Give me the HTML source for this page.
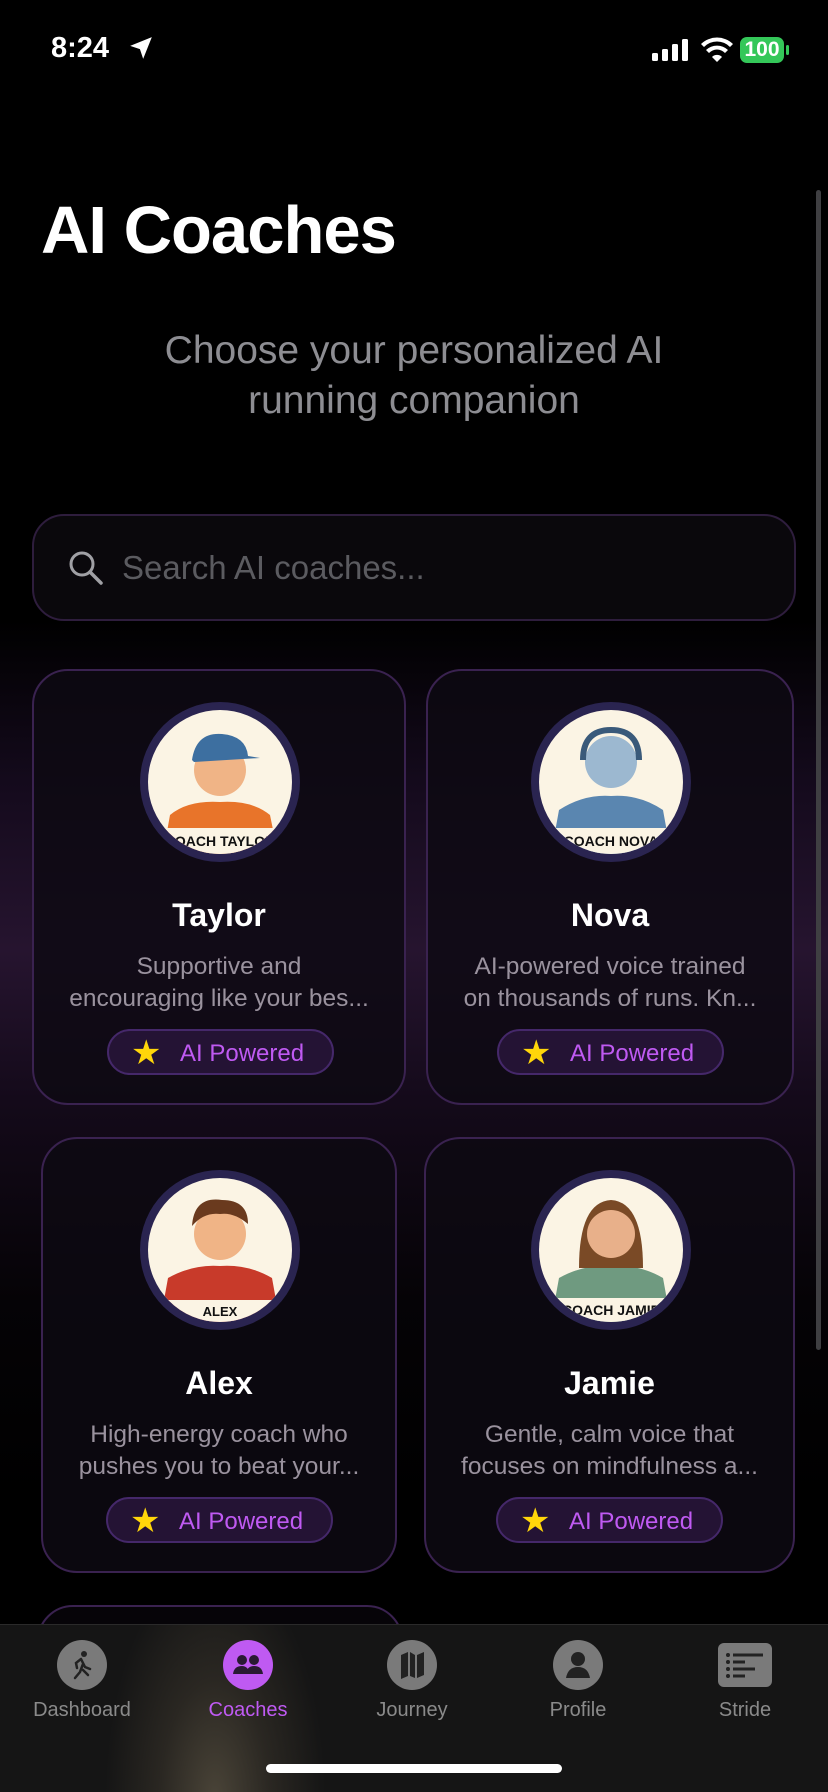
<!DOCTYPE html>
<html><head><meta charset="utf-8"><style>
*{margin:0;padding:0;box-sizing:border-box}
body{width:828px;height:1792px;overflow:hidden;background:#000;font-family:"Liberation Sans",sans-serif;position:relative;color:#fff}
.bg{position:absolute;left:0;top:0;width:828px;height:1792px;background:linear-gradient(180deg,#000 0px,#000 620px,#140a1c 780px,#26142f 950px,#140a1a 1100px,#050306 1300px,#000 1500px)}
.abs{position:absolute}
.title{left:41px;top:192px;font-size:67px;font-weight:bold;letter-spacing:-1px}
.sub{left:0;width:828px;top:326px;text-align:center;font-size:39px;line-height:50px;color:#8d8d92}
.search{left:32px;top:514px;width:764px;height:107px;border:2px solid #2e1d3d;border-radius:32px;background:#0a080c}
.search span{position:absolute;left:88px;top:33px;font-size:33px;color:#5b5b60}
.card{border:2px solid #3a2250;border-radius:36px;background:rgba(14,10,18,0.82)}
.av{position:absolute;width:160px;height:160px;border-radius:50%;background:#2a2450}
.av .in{position:absolute;left:8px;top:8px;width:144px;height:144px;border-radius:50%;background:#fbf4e4;overflow:hidden}
.name{position:absolute;width:100%;text-align:center;font-size:32px;font-weight:bold}
.desc{position:absolute;width:100%;text-align:center;font-size:24.5px;line-height:32px;color:#9a929e;white-space:nowrap}
.badge{position:absolute;width:227px;height:46px;border:2px solid #45286a;border-radius:23px;background:#241334}
.badge b{position:absolute;left:22px;top:2px;color:#ffd60a;font-size:34px;font-weight:normal}
.badge span{position:absolute;left:71px;top:9px;color:#bf5af2;font-size:24px}
.tab{left:0;top:1624px;width:828px;height:168px;background:radial-gradient(ellipse 110px 240px at 215px 175px,#4a4438 0%,#2a2722 50%,#151515 100%);border-top:1px solid #2a2a2a}
.ti{position:absolute;top:15px;width:50px;height:50px;border-radius:50%;background:#7a7a7a;transform:translateX(-50%)}
.tl{position:absolute;top:74px;font-size:20px;color:#8a8a8a;transform:translateX(-50%)}
</style></head><body>
<div class="bg"></div>
<div class="abs" style="left:51px;top:32px;font-size:29px;font-weight:bold">8:24</div>
<svg class="abs" style="left:128px;top:35px" width="26" height="26" viewBox="0 0 24 24"><path d="M22 2L2 10l9 3 3 9z" fill="#fff"/></svg>
<svg class="abs" style="left:652px;top:38px" width="40" height="24" viewBox="0 0 40 24"><rect x="0" y="15" width="6" height="8" rx="1.5" fill="#fff"/><rect x="10" y="11" width="6" height="12" rx="1.5" fill="#fff"/><rect x="20" y="6" width="6" height="17" rx="1.5" fill="#fff"/><rect x="30" y="1" width="6" height="22" rx="1.5" fill="#fff"/></svg>
<svg class="abs" style="left:700px;top:37px" width="34" height="26" viewBox="0 0 34 26"><path d="M17 25l-5-5a7 7 0 0 1 10 0z" fill="#fff"/><path d="M6 13a16 16 0 0 1 22 0l-3 3a11 11 0 0 0-16 0z" fill="#fff"/><path d="M1 7a23 23 0 0 1 32 0l-3 3a18 18 0 0 0-26 0z" fill="#fff"/></svg>
<div class="abs" style="left:740px;top:37px;width:44px;height:26px;border-radius:7px;background:#34c759;color:#fff;font-size:21px;font-weight:bold;text-align:center;line-height:26px">100</div>
<div class="abs" style="left:786px;top:45px;width:3px;height:10px;border-radius:2px;background:#34c759"></div>
<div class="abs" style="left:816px;top:190px;width:5px;height:1160px;border-radius:3px;background:#3f3f42"></div>

<div class="abs title">AI Coaches</div>
<div class="abs sub">Choose your personalized AI<br>running companion</div>
<div class="abs search">
<svg style="position:absolute;left:34px;top:34px" width="36" height="36" viewBox="0 0 36 36"><circle cx="14" cy="14" r="11" stroke="#a0a0a5" stroke-width="3" fill="none"/><path d="M22 22l11 11" stroke="#a0a0a5" stroke-width="3.5" stroke-linecap="round"/></svg>
<span>Search AI coaches...</span></div>

<div class="abs card" style="left:32px;top:669px;width:374px;height:436px">
 <div class="av" style="left:106px;top:31px"><div class="in"><svg width="144" height="144"><path d="M15 144 L22 105 Q40 90 72 92 Q104 90 122 105 L130 144Z" fill="#e8742a"/><circle cx="72" cy="60" r="26" fill="#f0b486"/><path d="M44 50 Q48 22 74 24 Q98 26 100 46 L112 48 L46 52Z" fill="#3d6fa0"/><rect x="0" y="118" width="144" height="26" fill="#fbf4e4"/><text x="72" y="136" font-size="14" font-weight="bold" text-anchor="middle" fill="#111" font-family="Liberation Sans">COACH TAYLOR</text></svg></div></div>
 <div class="name" style="top:226px">Taylor</div>
 <div class="desc" style="top:280px">Supportive and<br>encouraging like your bes...</div>
 <div class="badge" style="left:73px;top:358px"><b>★</b><span>AI Powered</span></div>
</div>
<div class="abs card" style="left:426px;top:669px;width:368px;height:436px">
 <div class="av" style="left:103px;top:31px"><div class="in"><svg width="144" height="144"><path d="M12 144 L20 100 Q45 84 72 86 Q100 84 124 100 L132 144Z" fill="#5a86b0"/><circle cx="72" cy="52" r="26" fill="#9cb8d0"/><path d="M44 50 Q44 20 72 20 Q100 20 100 50" fill="none" stroke="#3a5a7a" stroke-width="6"/><rect x="0" y="118" width="144" height="26" fill="#fbf4e4"/><text x="72" y="136" font-size="14" font-weight="bold" text-anchor="middle" fill="#111" font-family="Liberation Sans">COACH NOVA</text></svg></div></div>
 <div class="name" style="top:226px">Nova</div>
 <div class="desc" style="top:280px">AI-powered voice trained<br>on thousands of runs. Kn...</div>
 <div class="badge" style="left:69px;top:358px"><b>★</b><span>AI Powered</span></div>
</div>
<div class="abs card" style="left:41px;top:1137px;width:356px;height:436px">
 <div class="av" style="left:97px;top:31px"><div class="in"><svg width="144" height="144"><path d="M12 144 L20 100 Q45 86 72 88 Q100 86 124 100 L132 144Z" fill="#c83a2a"/><circle cx="72" cy="56" r="26" fill="#f0b486"/><path d="M44 48 Q46 18 74 22 Q100 22 100 46 Q86 34 72 36 Q56 34 44 48Z" fill="#6a3a1e"/><rect x="0" y="122" width="144" height="22" fill="#fbf4e4"/><text x="72" y="138" font-size="13" font-weight="bold" text-anchor="middle" fill="#111" font-family="Liberation Sans">ALEX</text></svg></div></div>
 <div class="name" style="top:226px">Alex</div>
 <div class="desc" style="top:280px">High-energy coach who<br>pushes you to beat your...</div>
 <div class="badge" style="left:63px;top:358px"><b>★</b><span>AI Powered</span></div>
</div>
<div class="abs card" style="left:424px;top:1137px;width:371px;height:436px">
 <div class="av" style="left:105px;top:31px"><div class="in"><svg width="144" height="144"><path d="M12 144 L20 100 Q45 86 72 88 Q100 86 124 100 L132 144Z" fill="#6f9a80"/><path d="M40 90 Q40 24 72 22 Q104 24 104 90Z" fill="#7a4a26"/><circle cx="72" cy="56" r="24" fill="#e8b08a"/><rect x="0" y="120" width="144" height="24" fill="#fbf4e4"/><text x="72" y="137" font-size="14" font-weight="bold" text-anchor="middle" fill="#111" font-family="Liberation Sans">COACH JAMIE</text></svg></div></div>
 <div class="name" style="top:226px">Jamie</div>
 <div class="desc" style="top:280px">Gentle, calm voice that<br>focuses on mindfulness a...</div>
 <div class="badge" style="left:70px;top:358px"><b>★</b><span>AI Powered</span></div>
</div>
<div class="abs card" style="left:37px;top:1605px;width:366px;height:100px;background:#060408"></div>

<div class="abs tab">
 <div class="ti" style="left:82px"><svg width="50" height="50" viewBox="-2 -2 50 50"><circle cx="25" cy="12" r="3" fill="#222"/><path d="M22 17l-5 4 1 5M22 17l4 8 5 2M24 22l-3 8-5 6M24 28l5 5" stroke="#222" stroke-width="2.5" fill="none" stroke-linecap="round"/></svg></div>
 <div class="tl" style="left:82px">Dashboard</div>
 <div class="ti" style="left:248px;background:#bf5af2"><svg width="50" height="50" viewBox="-2 -2 50 50"><circle cx="17" cy="18" r="5" fill="#2a1a33"/><circle cx="29" cy="18" r="5" fill="#2a1a33"/><path d="M8 32q1-8 9-8q6 0 8 8zM21 32q1-8 8-8q8 0 9 8z" fill="#2a1a33"/></svg></div>
 <div class="tl" style="left:248px;color:#bf5af2">Coaches</div>
 <div class="ti" style="left:412px"><svg width="50" height="50" viewBox="-2 -2 50 50"><path d="M12 13l7-3v24l-7 3zM21 10l5 3v23l-5-2zM28 13l7-3v23l-7 3z" fill="#222"/></svg></div>
 <div class="tl" style="left:412px">Journey</div>
 <div class="ti" style="left:578px"><svg width="50" height="50" viewBox="-2 -2 50 50"><circle cx="23" cy="17" r="7" fill="#222"/><path d="M11 36q2-11 12-11q10 0 12 11z" fill="#222"/></svg></div>
 <div class="tl" style="left:578px">Profile</div>
 <div class="ti" style="left:745px;width:54px;height:44px;border-radius:6px;top:18px"><svg width="54" height="44" viewBox="0 -1 54 42"><g fill="#222"><circle cx="10" cy="10" r="2"/><circle cx="10" cy="17" r="2"/><circle cx="10" cy="24" r="2"/><circle cx="10" cy="31" r="2"/><rect x="15" y="8.5" width="30" height="3"/><rect x="15" y="15.5" width="12" height="3"/><rect x="15" y="22.5" width="22" height="3"/><rect x="15" y="29.5" width="12" height="3"/></g></svg></div>
 <div class="tl" style="left:745px">Stride</div>
 <div class="abs" style="left:266px;top:139px;width:296px;height:9px;border-radius:5px;background:#fff"></div>
</div>
</body></html>
